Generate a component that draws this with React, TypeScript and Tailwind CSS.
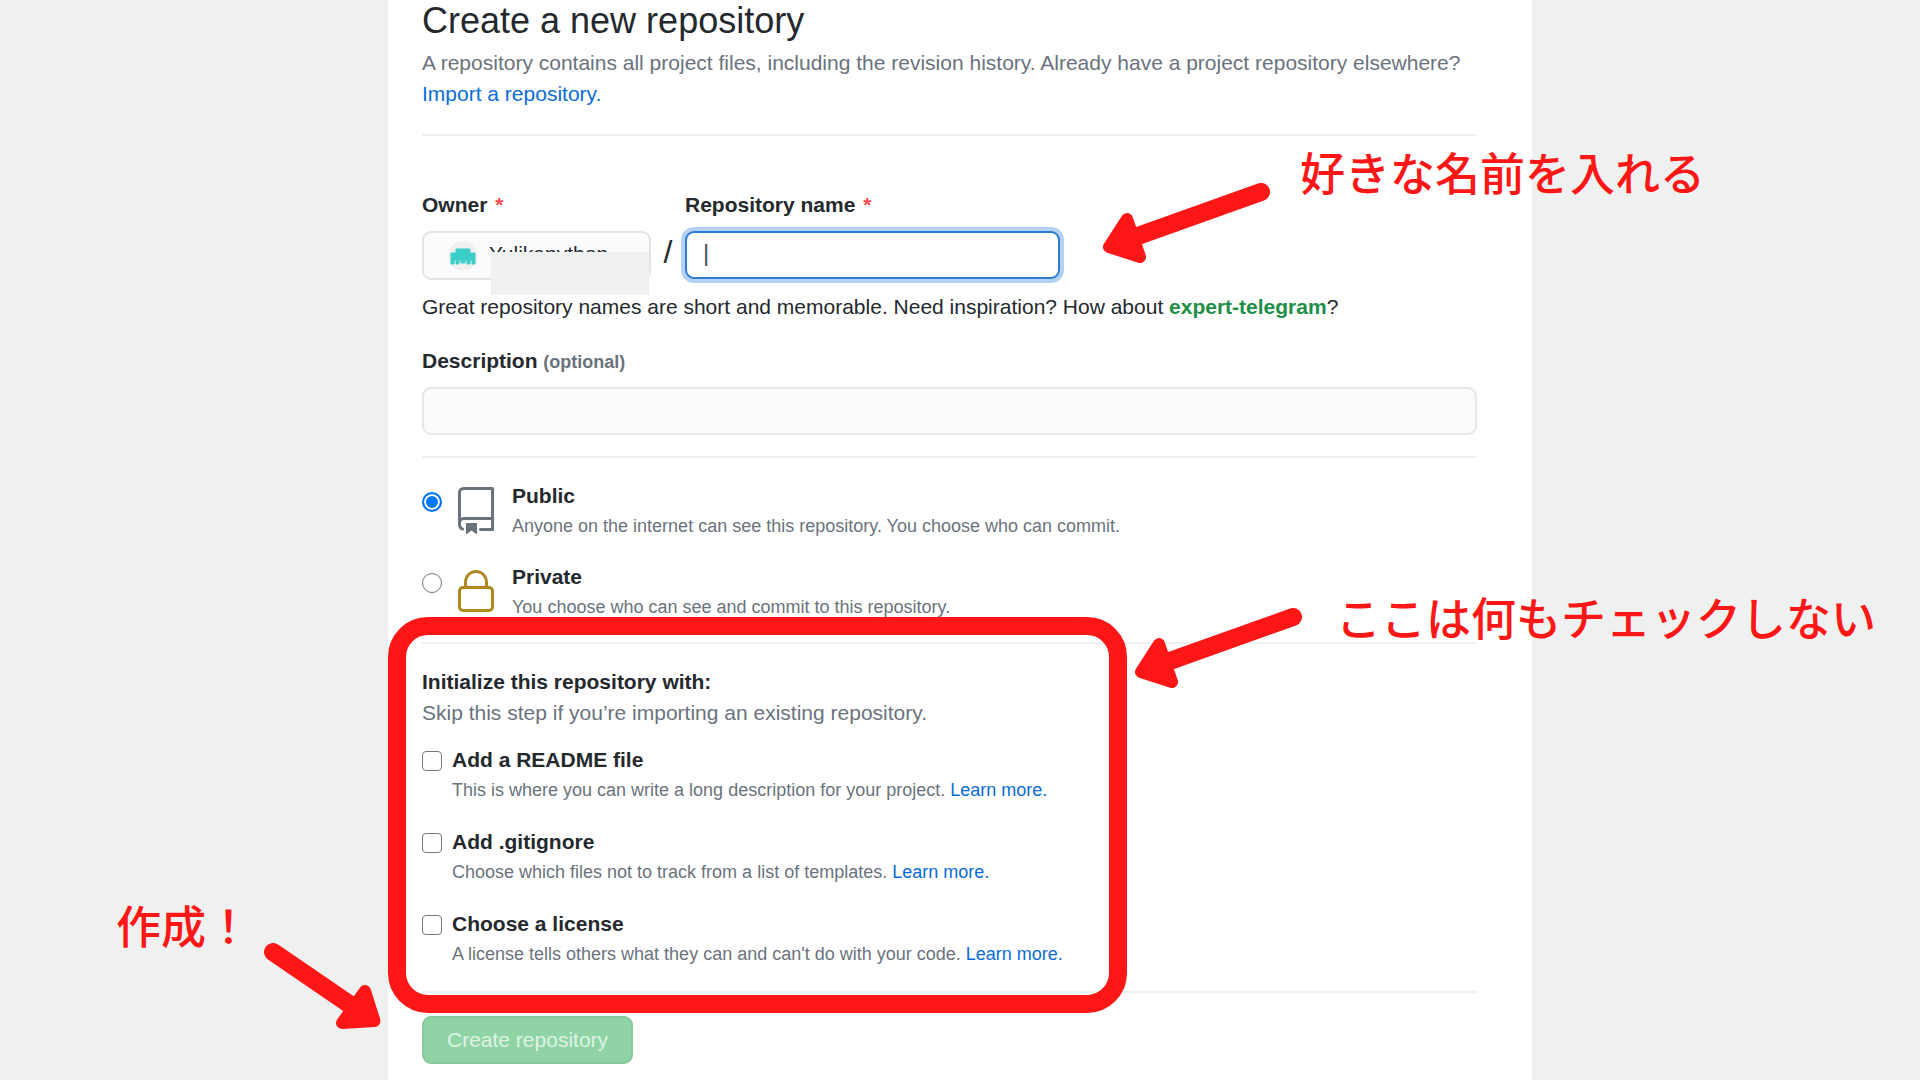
import type { ReactNode } from "react";

function Divider({ className }: { className: string }) {
  return <hr className={`h-[2px] border-0 bg-[#eff0f1] ${className}`} />;
}

function Required() {
  return <span className="ml-[2px] font-bold text-[#ff4a52]">*</span>;
}

function Avatar() {
  return (
    <svg viewBox="0 0 30 32" className="h-8 w-[30px] shrink-0" aria-hidden="true">
      <circle cx="15" cy="16" r="15" fill="#eff1f1" />
      <path
        d="M8 9h14v4h5v11h-3v-4h-2v4h-3v-4h-2v3h-4v-3h-2v4H8v-4H6v4H3V13h5z"
        fill="#3bcdc7"
        stroke="#3bcdc7"
        strokeWidth="1"
        strokeLinejoin="round"
      />
    </svg>
  );
}

function RepoIcon() {
  return (
    <svg viewBox="0 0 24 24" className="h-12 w-12 text-[#6a737d]" fill="currentColor" aria-hidden="true">
      <path
        fillRule="evenodd"
        d="M3 2.750A2.750 2.750 0 015.750 0h14.500a.75.75 0 01.75.75v20.500a.75.75 0 01-.75.75h-6a.75.75 0 010-1.500h5.250v-4H6A1.500 1.500 0 004.500 18v.750c0 .716.430 1.334 1.050 1.605a.75.75 0 01-.6 1.374A3.250 3.250 0 013 18.750v-16zM19.500 1.500V15H6c-.546 0-1.059.146-1.500.401V2.750c0-.690.560-1.250 1.250-1.250H19.500z"
      />
      <path d="M7 18.250a.25.25 0 01.25-.25h5a.25.25 0 01.25.25v5.010a.25.25 0 01-.397.201l-2.206-1.604a.25.25 0 00-.294 0L7.397 23.460a.25.25 0 01-.397-.200v-5.010z" />
    </svg>
  );
}

function LockIcon() {
  return (
    <svg viewBox="0 0 24 24" className="h-12 w-12 text-[#b08820]" fill="currentColor" aria-hidden="true">
      <path
        fillRule="evenodd"
        d="M6 9V7.250C6 3.845 8.503 1 12 1s6 2.845 6 6.250V9h.5a2.500 2.500 0 012.500 2.500v8a2.500 2.500 0 01-2.500 2.500h-13A2.500 2.500 0 013 19.500v-8A2.500 2.500 0 015.500 9H6zm1.500-1.750C7.500 4.580 9.422 2.500 12 2.500c2.578 0 4.500 2.080 4.500 4.750V9h-9V7.250zm-3 4.250a1 1 0 011-1h13a1 1 0 011 1v8a1 1 0 01-1 1h-13a1 1 0 01-1-1v-8z"
      />
    </svg>
  );
}

function LeftArrow({ className }: { className: string }) {
  return (
    <svg viewBox="0 0 168 80" className={`absolute h-20 w-[168px] ${className}`} aria-hidden="true">
      <path d="M32 54L158 9" stroke="#ff1616" strokeWidth="18" strokeLinecap="round" />
      <path d="M6 64L24 36L37 74Z" fill="#ff1616" stroke="#ff1616" strokeWidth="12" strokeLinejoin="round" />
    </svg>
  );
}

function DownArrow({ className }: { className: string }) {
  return (
    <svg viewBox="0 0 118 88" className={`absolute h-[88px] w-[118px] ${className}`} aria-hidden="true">
      <path d="M9 9L85 61" stroke="#ff1616" strokeWidth="18" strokeLinecap="round" />
      <path d="M110.500 78L101 48L78 80Z" fill="#ff1616" stroke="#ff1616" strokeWidth="12" strokeLinejoin="round" />
    </svg>
  );
}

function Note({ className, children }: { className: string; children: ReactNode }) {
  return (
    <p
      className={`absolute whitespace-nowrap font-['Noto_Sans_CJK_JP',sans-serif] text-[45px] leading-[60px] font-medium text-[#ff1616] ${className}`}
    >
      {children}
    </p>
  );
}

function VisibilityOption(props: { id: string; title: string; text: string; icon: ReactNode; checked?: boolean }) {
  return (
    <div className="flex">
      <input
        type="radio"
        name="visibility"
        id={props.id}
        defaultChecked={props.checked}
        className="mt-3 size-5 shrink-0 appearance-none rounded-full border border-[#767676] bg-white checked:border-2 checked:border-[#0075ff] checked:bg-[#0075ff] checked:shadow-[inset_0_0_0_2px_white]"
      />
      <div className="mt-[7px] ml-[10px] shrink-0">{props.icon}</div>
      <div className="ml-3">
        <label htmlFor={props.id} className="block font-bold">
          {props.title}
        </label>
        <p className="text-lg leading-[30px] text-[#6a737d]">{props.text}</p>
      </div>
    </div>
  );
}

function InitOption(props: { id: string; title: string; text: string }) {
  return (
    <div className="flex gap-[10px]">
      <input
        type="checkbox"
        id={props.id}
        className="mt-[7px] size-5 shrink-0 appearance-none rounded-[4px] border border-[#767676] bg-white checked:bg-[#0075ff]"
      />
      <div>
        <label htmlFor={props.id} className="block font-bold">
          {props.title}
        </label>
        <p className="text-lg leading-[30px] text-[#6a737d]">
          {props.text}{" "}
          <a href="#learn-more" className="text-[#0a6cdb]">
            Learn more.
          </a>
        </p>
      </div>
    </div>
  );
}

export default function App() {
  return (
    <div className="min-h-screen overflow-hidden bg-[#eff1f1] font-['Liberation_Sans',Arial,sans-serif] text-[21px] leading-[31px] text-[#24292e]">
      <main className="relative mx-auto min-h-screen max-w-[1144px] bg-white pr-[55px] pl-[34px]">
        <h1 className="text-4xl leading-[42px]">Create a new repository</h1>
        <p className="mt-[5px] text-[#6a737d]">
          A repository contains all project files, including the revision history. Already have a project repository
          elsewhere?
          <br />
          <a href="#import" className="text-[#0a6cdb]">
            Import a repository.
          </a>
        </p>
        <Divider className="mt-[25px]" />

        <form onSubmit={(e) => e.preventDefault()}>
          <div className="relative mt-[53px] flex">
            <div className="w-[229px]">
              <label htmlFor="owner" className="block font-bold">
                Owner <Required />
              </label>
              <div className="relative mt-[11px]">
                <button
                  id="owner"
                  type="button"
                  className="flex h-[49px] w-full items-center gap-[11px] rounded-[9px] border-2 border-[#e2e4e6] bg-[#fafbfc] pl-6 font-medium"
                >
                  <Avatar />
                  <span className="pb-1">Yulikapython</span>
                </button>
                <div className="absolute top-[21px] left-[69px] h-[43px] w-[158px] bg-[#eff1f1]" />
              </div>
            </div>
            <span className="mt-[41px] w-[34px] text-center text-[32px] leading-[44px]">/</span>
            <div className="w-[375px]">
              <label htmlFor="repo-name" className="block font-bold">
                Repository name <Required />
              </label>
              <input
                id="repo-name"
                type="text"
                defaultValue="|"
                className="mt-[11px] block h-12 w-full rounded-[9px] border-2 border-[#2a7bd6] bg-white px-4 pb-1 text-2xl text-[#4a4e58] shadow-[0_0_0_4px_#b3d1f2] outline-none"
              />
            </div>
            <LeftArrow className="-top-[6px] left-[681px]" />
            <Note className="-top-[47px] left-[878px]">好きな名前を入れる</Note>
          </div>
          <p className="mt-[11px]">
            Great repository names are short and memorable. Need inspiration? How about{" "}
            <strong className="font-bold text-[#1e8f46]">expert-telegram</strong>?
          </p>

          <label htmlFor="description" className="mt-[23px] block font-bold">
            Description <span className="text-lg text-[#6a737d]">(optional)</span>
          </label>
          <input
            id="description"
            type="text"
            className="mt-[11px] block h-12 w-full rounded-[9px] border-2 border-[#e5e7ea] bg-[#fafbfc] px-4 outline-none"
          />
          <Divider className="mt-[21px]" />

          <div className="mt-[22px] flex flex-col gap-5">
            <VisibilityOption
              id="public"
              title="Public"
              text="Anyone on the internet can see this repository. You choose who can commit."
              icon={<RepoIcon />}
              checked
            />
            <VisibilityOption
              id="private"
              title="Private"
              text="You choose who can see and commit to this repository."
              icon={<LockIcon />}
            />
          </div>
          <Divider className="mt-5" />

          <section className="relative mt-[22px]">
            <h2 className="font-bold">Initialize this repository with:</h2>
            <p className="text-[#6a737d]">Skip this step if you’re importing an existing repository.</p>
            <div className="mt-4 flex flex-col gap-[21px]">
              <InitOption
                id="readme"
                title="Add a README file"
                text="This is where you can write a long description for your project."
              />
              <InitOption
                id="gitignore"
                title="Add .gitignore"
                text="Choose which files not to track from a list of templates."
              />
              <InitOption
                id="license"
                title="Choose a license"
                text="A license tells others what they can and can't do with your code."
              />
            </div>
            <div className="pointer-events-none absolute -top-[49px] -bottom-11 -left-[34px] z-10 w-[739px] rounded-[40px] border-[18px] border-[#ff1616]" />
            <LeftArrow className="-top-[58px] left-[713px]" />
            <Note className="-top-[79px] left-[914px]">ここは何もチェックしない</Note>
          </section>
          <Divider className="mt-[22px]" />

          <div className="relative mt-[23px]">
            <button
              type="submit"
              className="h-12 rounded-[9px] border-2 border-[#87c99a] bg-[#90d3a4] px-[23px] pb-px text-[#dff3e5]"
            >
              Create repository
            </button>
            <DownArrow className="-top-[73px] -left-[158px]" />
            <Note className="-top-[121px] -left-[306px]">作成！</Note>
          </div>
        </form>
      </main>
    </div>
  );
}
